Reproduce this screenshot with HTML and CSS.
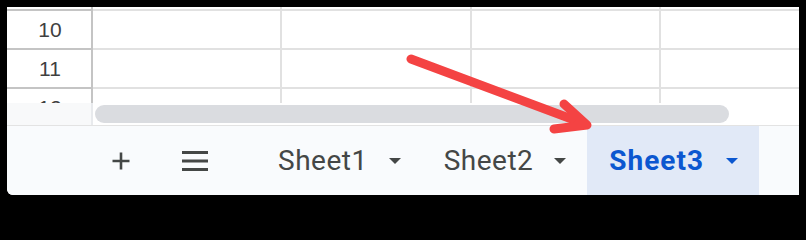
FILE: index.html
```html
<!DOCTYPE html>
<html>
<head>
<meta charset="utf-8">
<link rel="stylesheet" href="styles.css">
</head>
<body>
<div class="frame">
  <div class="grid">
    <div class="row partial">
      <div class="rh"></div><div class="cell"></div><div class="cell"></div><div class="cell"></div><div class="cell last"></div>
    </div>
    <div class="row">
      <div class="rh">10</div><div class="cell"></div><div class="cell"></div><div class="cell"></div><div class="cell last"></div>
    </div>
    <div class="row">
      <div class="rh">11</div><div class="cell"></div><div class="cell"></div><div class="cell"></div><div class="cell last"></div>
    </div>
    <div class="row">
      <div class="rh">12</div><div class="cell"></div><div class="cell"></div><div class="cell"></div><div class="cell last"></div>
    </div>
  </div>
  <div class="hscroll">
    <div class="corner"></div>
    <div class="thumb"></div>
  </div>
  <div class="sheetbar">
    <div class="iconbtn plus">
      <svg width="20" height="20" viewBox="0 0 20 20"><path d="M10 1.5v17M1.5 10h17" stroke="#444746" stroke-width="2.6" fill="none"/></svg>
    </div>
    <div class="iconbtn menu">
      <svg width="26" height="20" viewBox="0 0 26 20"><path d="M0 1.5h26M0 10h26M0 18.5h26" stroke="#444746" stroke-width="2.8" fill="none"/></svg>
    </div>
    <div class="tab"><span class="label">Sheet1</span><span class="caret"></span></div>
    <div class="tab"><span class="label">Sheet2</span><span class="caret"></span></div>
    <div class="tab active"><span class="label">Sheet3</span><span class="caret"></span></div>
  </div>
</div>
<svg class="arrow" width="806" height="202" viewBox="0 0 806 202">
  <g stroke="#f44343" stroke-width="9" stroke-linecap="round" stroke-linejoin="round" fill="none">
    <path d="M411 59 L585 124"/>
    <path d="M564 104 L587 125 L554 129"/>
  </g>
</svg>
</body>
</html>
```
FILE: styles.css
```css
html {
  height: 202px;
  overflow: hidden;
  background: #000;
}
body {
  margin: 0;
  padding: 7px;
  width: 792px;
  height: 188px;
  position: relative;
  background: #000;
}
.frame {
  width: 792px;
  height: 188px;
  background: #fff;
  border-bottom-left-radius: 6px;
  overflow: hidden;
  display: flex;
  flex-direction: column;
}
.grid {
  height: 96px;
  overflow: hidden;
  flex: none;
}
.row {
  display: grid;
  grid-template-columns: 86px 189px 190px 189px 1fr;
  height: 39px;
  box-sizing: border-box;
  border-top: 2px solid #e1e1e1;
}
.row.partial {
  height: 2px;
  border-top: 0;
}
.rh {
  box-sizing: border-box;
  border-right: 2px solid #c4c4c4;
  box-shadow: 0 -2px 0 #c4c4c4;
  display: flex;
  align-items: center;
  justify-content: center;
  font-family: "Liberation Sans", Arial, sans-serif;
  font-size: 21px;
  color: #3f3f3f;
  padding-left: 2px;
}
.row.partial .rh {
  box-shadow: none;
}
.cell {
  box-sizing: border-box;
  border-right: 2px solid #e1e1e1;
}
.cell.last {
  border-right: 0;
}
.hscroll {
  height: 22px;
  flex: none;
  display: flex;
  border-bottom: 1px solid #e3e3e3;
  background: #fff;
}
.corner {
  width: 84px;
  background: #f8f9fa;
  border-right: 2px solid #e8eaed;
}
.thumb {
  width: 634px;
  height: 18px;
  margin: 2px 0 0 2px;
  border-radius: 9px;
  background: #dadce0;
}
.sheetbar {
  flex: 1;
  display: flex;
  align-items: stretch;
  background: #f9fbfd;
  padding-left: 90px;
  font-family: Roboto, "Noto Sans", sans-serif;
}
.iconbtn {
  width: 48px;
  display: flex;
  align-items: center;
  justify-content: center;
}
.iconbtn.menu {
  margin-left: 26px;
  margin-right: 37px;
}
.tab {
  display: flex;
  align-items: center;
  padding: 0 21px 0 22px;
  color: #444746;
  font-size: 28px;
  letter-spacing: 0.5px;
}
.tab .label {
  line-height: 1;
}
.caret {
  margin-left: 21px;
  width: 0;
  height: 0;
  border-left: 6px solid transparent;
  border-right: 6px solid transparent;
  border-top: 6px solid #444746;
}
.tab.active {
  background: #e1e9f7;
  color: #0b57d0;
  font-weight: 700;
  letter-spacing: 1px;
}
.tab.active .caret {
  margin-left: 22px;
  border-top-color: #0b57d0;
}
.arrow {
  position: absolute;
  left: 0;
  top: 0;
  pointer-events: none;
}
```
